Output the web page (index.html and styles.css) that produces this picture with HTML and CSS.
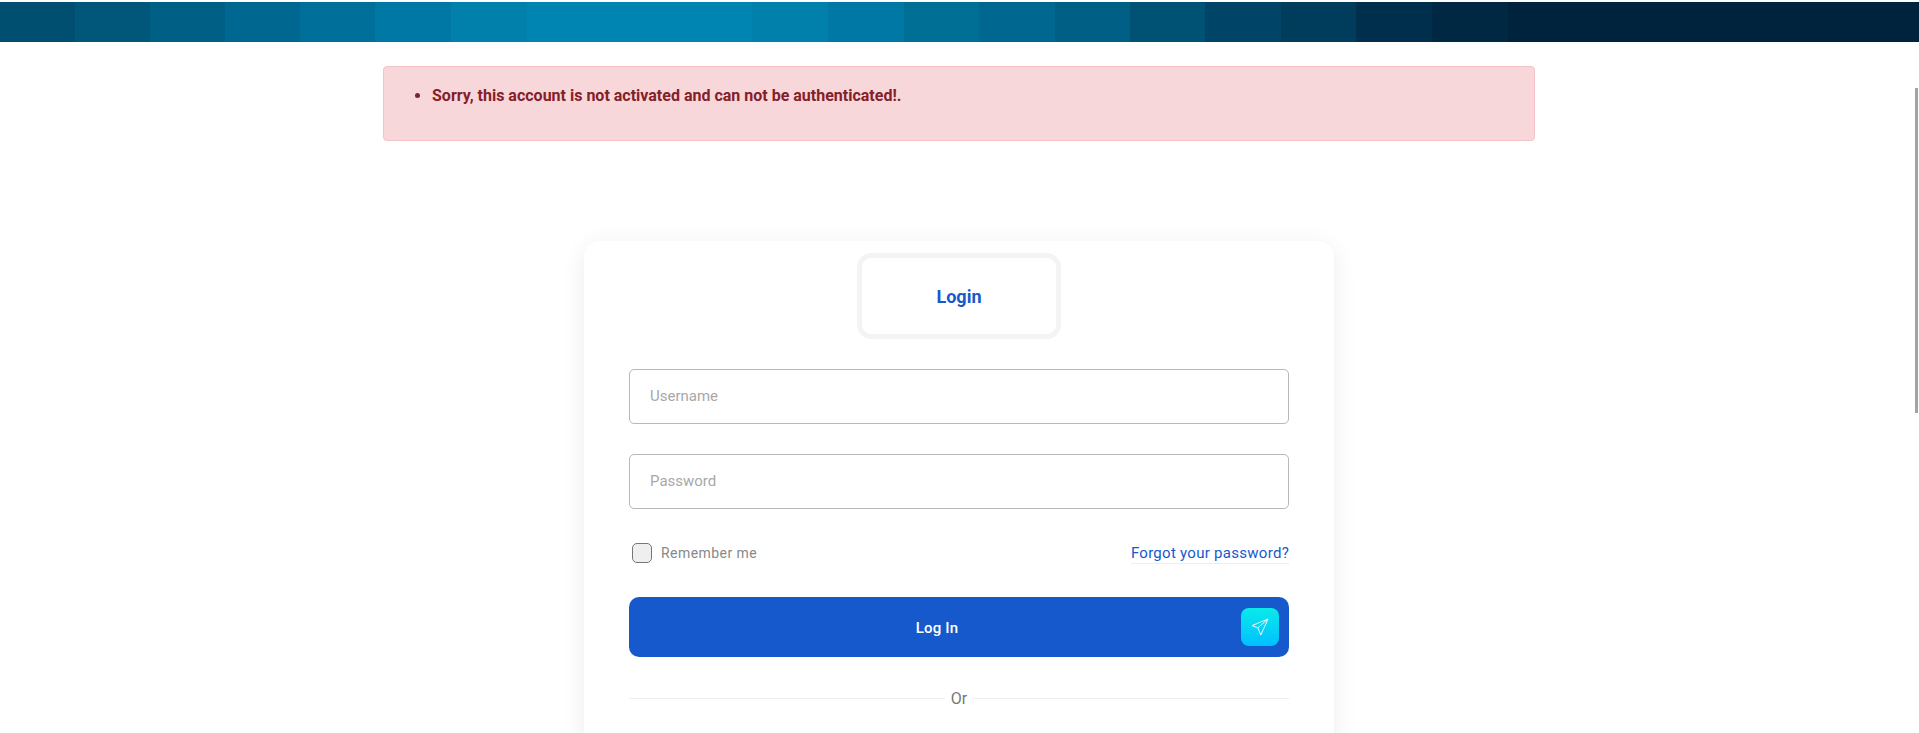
FILE: index.html
```html
<!DOCTYPE html>
<html lang="en">
<head>
<meta charset="utf-8">
<title>Login</title>
<link rel="stylesheet" href="styles.css">
</head>
<body>
<div class="strip"></div>
<main class="page">
  <div class="alert">
    <ul class="alert-list">
      <li>Sorry, this account is not activated and can not be authenticated!.</li>
    </ul>
  </div>
  <section class="card">
    <div class="tab-row"><div class="tab">Login</div></div>
    <form class="form">
      <input class="field" type="text" placeholder="Username">
      <input class="field" type="password" placeholder="Password">
      <div class="options">
        <label class="remember"><span class="check"></span><span>Remember me</span></label>
        <a class="forgot" href="#">Forgot your password?</a>
      </div>
      <button class="submit" type="button">
        <span class="submit-label">Log In</span>
        <span class="submit-icon">
          <svg width="18" height="18" viewBox="0 0 18 18" fill="none" stroke="#fff" stroke-width="0.9" stroke-linejoin="round"><path d="M17 1 1 7.6l5.9 2.2 2.9 7.2zM17 1 6.9 9.8"/></svg>
        </span>
      </button>
      <div class="divider"><span>Or</span></div>
    </form>
  </section>
</main>
<div class="scroll-thumb"></div>
</body>
</html>
```
FILE: styles.css
```css
* { box-sizing: border-box; }
html, body { margin: 0; height: 733px; overflow: hidden; background: #fff; }
body { font-family: Roboto, sans-serif; position: relative; }
.strip {
  margin-top: 2px;
  height: 40px;
  background: linear-gradient(90deg,
    #004f70 0 75px, #00577a 75px 150px, #005f85 150px 225px, #006790 225px 300px,
    #006f99 300px 375px, #0078a5 375px 451px, #0080aa 451px 527px, #0085b3 527px 752px,
    #0080ab 752px 828px, #0078a6 828px 904px, #006f96 904px 979px, #006890 979px 1055px,
    #005f85 1055px 1130px, #005274 1130px 1205px, #004568 1205px 1281px, #003c5c 1281px 1356px,
    #002f4e 1356px 1432px, #002842 1432px 1508px, #00233d 1508px);
}
.page { display: flex; flex-direction: column; align-items: center; padding-right: 1px; }
.alert {
  margin-top: 24px;
  width: 1152px;
  height: 75px;
  background: #f8d7da;
  border: 1px solid #f5c2c7;
  border-radius: 4px;
  color: #842029;
  font-weight: 700;
  font-size: 16px;
  padding: 17px 16px 0;
}
.alert-list { margin: 0 0 0 1px; padding-left: 31px; line-height: 24px; }
.card {
  margin-top: 100px;
  width: 750px;
  height: 700px;
  background: #fff;
  border-radius: 16px;
  box-shadow: 0 5px 25px rgba(0,0,0,.08);
  padding: 12px 45px 0;
}
.tab-row { display: flex; justify-content: center; }
.tab {
  width: 204px;
  height: 86px;
  border: 5px solid #f4f4f4;
  border-radius: 14px;
  display: flex;
  align-items: center;
  justify-content: center;
  color: #1659cc;
  font-weight: 700;
  font-size: 18px;
}
.form { display: flex; flex-direction: column; margin-top: 30px; }
.field {
  height: 55px;
  width: 100%;
  margin-bottom: 30px;
  border: 1px solid #b8b8b8;
  border-radius: 5px;
  padding: 0 20px 2px;
  font: 400 15px Roboto, sans-serif;
  background: #fff;
}
.field::placeholder { color: #a8a8a8; opacity: 1; }
.options { display: flex; justify-content: space-between; align-items: center; height: 30px; margin-top: -1px; padding-left: 3px; }
.remember { display: flex; align-items: center; gap: 9px; color: #888; font-size: 14px; letter-spacing: .45px; }
.check { width: 20px; height: 20px; background: #efefef; border: 1px solid #767676; border-radius: 5px; }
.forgot { color: #1659cc; font-size: 15px; letter-spacing: .28px; text-decoration: none; border-bottom: 1px solid #eee; line-height: 20px; }
.submit {
  margin-top: 29px;
  height: 60px;
  background: #1659cc;
  border: 0;
  border-radius: 10px;
  display: flex;
  align-items: center;
  padding: 0 10px 0 0;
  color: #fff;
  font: 500 15px Roboto, sans-serif;
  letter-spacing: .2px;
}
.submit-label { flex: 1; text-align: center; padding: 2px 0 0 4px; }
.submit-icon {
  width: 38px;
  height: 38px;
  border-radius: 8px;
  background: linear-gradient(180deg, #0aeaea, #00bfff);
  display: flex;
  align-items: center;
  justify-content: center;
}
.divider { margin-top: 41px; height: 1px; background: #eee; display: flex; justify-content: center; align-items: center; }
.divider span { background: #fff; padding: 0 6px; color: #777; font-size: 16px; }
.scroll-thumb { position: absolute; left: 1915px; top: 88px; width: 3px; height: 325px; background: #a0a3a3; }
```
